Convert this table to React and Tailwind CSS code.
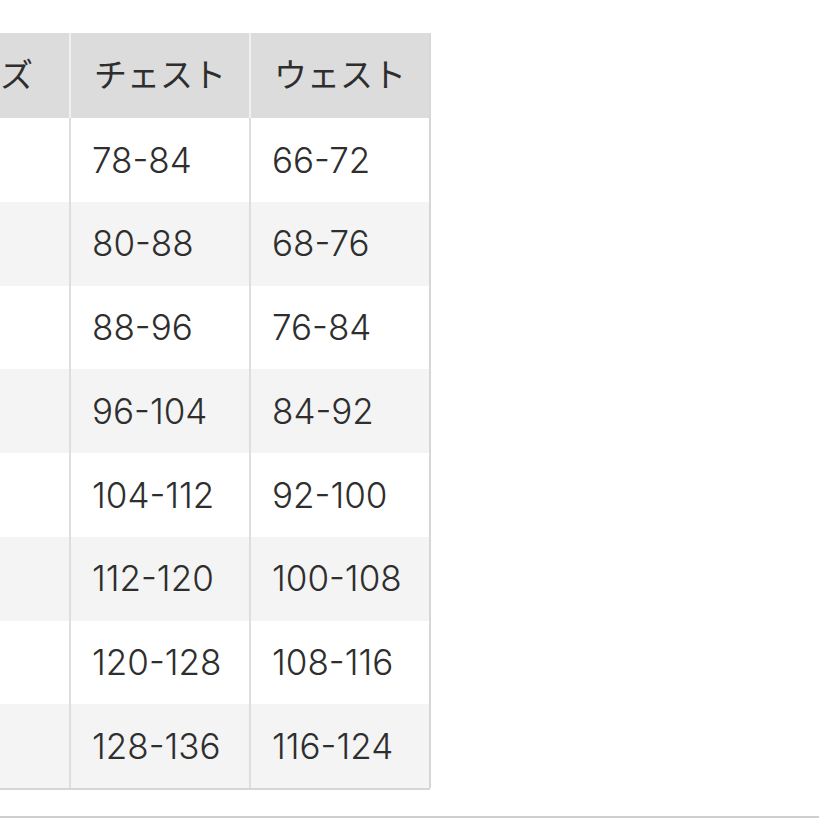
const rows = [
  ['78-84', '66-72'],
  ['80-88', '68-76'],
  ['88-96', '76-84'],
  ['96-104', '84-92'],
  ['104-112', '92-100'],
  ['112-120', '100-108'],
  ['120-128', '108-116'],
  ['128-136', '116-124'],
];

const font = { fontFamily: 'Inter, "Noto Sans CJK JP", sans-serif' };

export default function App() {
  return (
    <div className="w-[819px] h-[819px] bg-white overflow-hidden flex flex-col" style={font}>
      {/* table is scrolled sideways: the size column sits mostly off the left edge */}
      <div className="pt-[33px] ml-[-90px]">
        <table className="table-fixed border-collapse text-[#2e2e2e]">
          <colgroup>
            <col className="w-[160px]" />
            <col className="w-[180px]" />
            <col className="w-[180px]" />
          </colgroup>
          <thead>
            <tr className="h-[85px] bg-[#dcdcdc]">
              <th className="pl-[25px] pr-0 text-left font-normal text-[33px] border-r-2 border-[#f0f0f0]">サイズ</th>
              <th className="pl-[23px] pr-0 text-left font-normal text-[33px] border-r-2 border-[#f0f0f0]">チェスト</th>
              <th className="pl-[23px] pr-0 text-left font-normal text-[33px] border-r-2 border-[#d8d8d8]">ウェスト</th>
            </tr>
          </thead>
          <tbody>
            {rows.map((r, i) => (
              <tr key={r[0]} className={i % 2 ? 'h-[83.75px] bg-[#f4f4f4]' : 'h-[83.75px] bg-white'}>
                <td className="border-r-2 border-[#dedede]" />
                <td className="pl-[21px] text-[35px] font-light border-r-2 border-[#dedede]">{r[0]}</td>
                <td className="pl-[21px] text-[35px] font-light border-r-2 border-[#d6d6d6]">{r[1]}</td>
              </tr>
            ))}
          </tbody>
          <tfoot>
            <tr>
              <td colSpan={3} className="h-[2px] p-0 bg-[#d6d6d6]" />
            </tr>
          </tfoot>
        </table>
      </div>
      <div className="mt-auto mb-[1px] h-[2px] bg-[#cfcfcf]" />
    </div>
  );
}
